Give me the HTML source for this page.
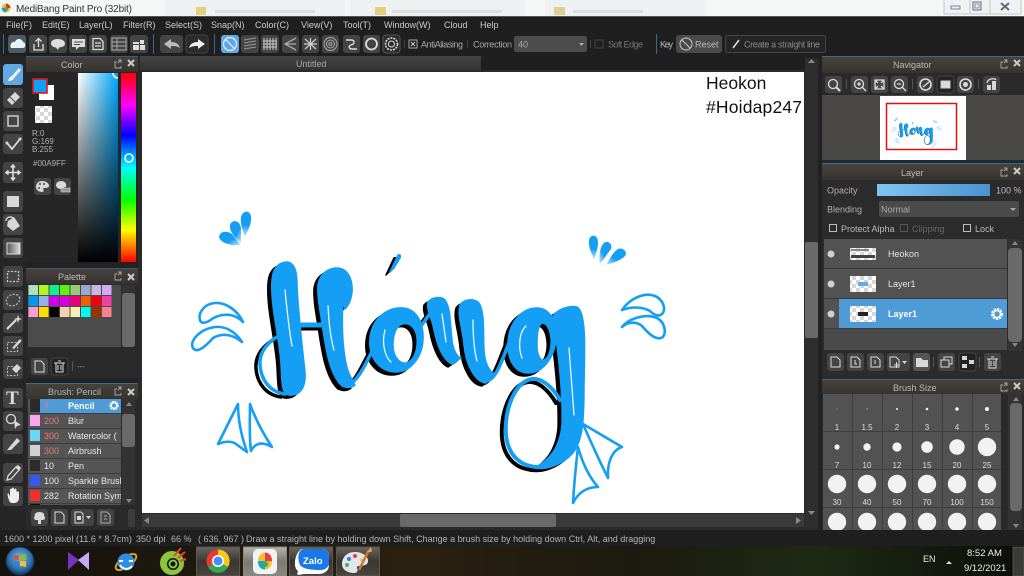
<!DOCTYPE html>
<html><head><meta charset="utf-8"><style>
html,body{margin:0;padding:0;background:#222;width:1024px;height:576px;overflow:hidden}
svg{display:block}
text{font-family:"Liberation Sans",sans-serif;font-size:9px;fill:#bcbcbc}
.i{fill:none;stroke:#ddd;stroke-width:1.3}
.f{fill:#ddd}
.d{fill:#d8d8d8}
.bt{fill:#444}
.l{font-size:9px;fill:#ccc}
.a{fill:currentColor;stroke:currentColor;stroke-width:1.5;stroke-linejoin:round}
.s{fill:none;stroke:currentColor;stroke-linecap:round;stroke-linejoin:round}
.dot{fill:#f2f2f2}
</style></head><body>
<svg width="1024" height="576" viewBox="0 0 1024 576" xmlns="http://www.w3.org/2000/svg">
<defs>
<linearGradient id="hue" x1="0" y1="0" x2="0" y2="1">
<stop offset="0" stop-color="#ff0000"/><stop offset=".17" stop-color="#ff00ff"/><stop offset=".33" stop-color="#0000ff"/><stop offset=".5" stop-color="#00ffff"/><stop offset=".67" stop-color="#00ff00"/><stop offset=".83" stop-color="#ffff00"/><stop offset="1" stop-color="#ff0000"/>
</linearGradient>
<linearGradient id="sv1"><stop offset="0" stop-color="#fff"/><stop offset="1" stop-color="#00a9ff"/></linearGradient>
<linearGradient id="sv2" x1="0" y1="0" x2="0" y2="1"><stop offset="0" stop-color="#000" stop-opacity="0"/><stop offset="1" stop-color="#000"/></linearGradient>
<linearGradient id="tb" x1="0" y1="0" x2="0" y2="1"><stop offset="0" stop-color="#47423e"/><stop offset="1" stop-color="#36332f"/></linearGradient>
<linearGradient id="tab" x1="0" y1="0" x2="0" y2="1"><stop offset="0" stop-color="#444"/><stop offset="1" stop-color="#333"/></linearGradient>
<linearGradient id="op"><stop offset="0" stop-color="#80c4f4"/><stop offset="1" stop-color="#4a94d0"/></linearGradient>
<linearGradient id="gr"><stop offset="0" stop-color="#555"/><stop offset="1" stop-color="#ddd"/></linearGradient>
<linearGradient id="tk" x1="0" y1="0" x2="0" y2="1"><stop offset="0" stop-color="#6a655e"/><stop offset=".5" stop-color="#3a3630"/><stop offset="1" stop-color="#4a453e"/></linearGradient>
<linearGradient id="tk2" x1="0" y1="0" x2="0" y2="1"><stop offset="0" stop-color="#b8b4ae"/><stop offset=".5" stop-color="#7c7872"/><stop offset="1" stop-color="#8c8880"/></linearGradient>
<linearGradient id="wall"><stop offset="0" stop-color="#14120e"/><stop offset=".4" stop-color="#2a2010"/><stop offset=".62" stop-color="#1c1a10"/><stop offset=".8" stop-color="#1e2a14"/><stop offset="1" stop-color="#0c0c0a"/></linearGradient>
<linearGradient id="d1" x1="1" y1="0" x2="0" y2="1"><stop offset="0" stop-color="#149ff5"/><stop offset=".6" stop-color="#149ff5"/><stop offset="1" stop-color="#d8eefc"/></linearGradient>
<linearGradient id="d2" x1="0" y1="0" x2="1" y2="1"><stop offset="0" stop-color="#149ff5"/><stop offset=".6" stop-color="#149ff5"/><stop offset="1" stop-color="#d8eefc"/></linearGradient>
<linearGradient id="d3" x1="0" y1="0" x2="0" y2="1"><stop offset="0" stop-color="#149ff5"/><stop offset=".55" stop-color="#149ff5"/><stop offset="1" stop-color="#d8eefc"/></linearGradient>
<radialGradient id="orb" cx=".5" cy=".4" r=".6"><stop offset="0" stop-color="#7ab8e8"/><stop offset=".7" stop-color="#2a6ca8"/><stop offset="1" stop-color="#12365a"/></radialGradient>
<pattern id="chk" width="8" height="8" patternUnits="userSpaceOnUse"><rect width="8" height="8" fill="#fff"/><rect width="4" height="4" fill="#d8d8d8"/><rect x="4" y="4" width="4" height="4" fill="#d8d8d8"/></pattern>
<clipPath id="cCanvas"><rect x="142" y="72" width="662" height="441"/></clipPath>
<clipPath id="cBrush"><rect x="28" y="399" width="93" height="106"/></clipPath>
<clipPath id="cSize"><rect x="823" y="394" width="178" height="137"/></clipPath>

<g id="letters">
<path class="a" d="M272,280 C273,265 282,262 287,262 C296,263 297,275 297,285 C298,310 302,345 305,372 C306,388 300,396 289,395 C281,394 282,380 281,365 C280,340 270,305 272,280 Z"/>
<path class="s" stroke-width="3.500" d="M280,335 C268,342 259,352 260,365 C261,380 270,392 285,394"/>
<path class="s" stroke-width="5" d="M298,325 L322,325"/>
<path class="a" d="M318,285 C320,272 330,268 337,268 C348,268 353,280 352,292 C351,300 348,306 345,309 L343,300 C342,318 342,340 345,358 C347,372 352,380 355,385 C352,388 347,388 342,386 C330,375 326,350 323,330 C321,315 317,298 318,285 Z"/>
<path class="s" stroke-width="3.500" d="M350,384 C360,378 366,362 373,350"/>
<path class="a" fill-rule="evenodd" d="M370,338 C372,318 388,307 403,308 C416,309 424,322 423,340 C422,358 410,372 396,372 C380,372 368,358 370,338 Z M393,345 C393,356 399,364 406,363 C414,361 418,350 417,338 C416,328 410,322 402,324 C396,326 393,335 393,345 Z"/>
<path class="a" d="M398,255 C400,254 401,256 400,258 L394,268 L390,272 Z"/>
<path class="s" stroke-width="3.500" d="M418,330 C424,322 432,310 440,302"/>
<path class="a" d="M428,302 C432,297 441,296 445,300 C451,308 450,325 452,340 C453,350 457,357 461,358 L452,364 C443,360 437,345 434,330 C432,318 426,310 428,302 Z"/>
<path class="a" d="M460,305 C464,299 474,298 479,303 C485,312 483,335 484,350 C485,365 490,372 495,374 L486,383 C475,382 466,365 464,345 C463,330 457,315 460,305 Z"/>
<path class="s" stroke-width="3.500" d="M486,381 C498,380 504,352 512,336"/>
<path class="a" fill-rule="evenodd" d="M508,345 C508,322 522,308 537,308 C548,308 556,318 556,336 C556,355 544,373 528,373 C516,373 508,362 508,345 Z M537,345 C537,355 540,361 544,360 C549,358 552,348 551,338 C550,328 546,323 542,323 C538,325 537,335 537,345 Z"/>
<path class="a" d="M553,316 C558,309 570,305 577,307 C586,312 585,345 584,385 C584,420 583,440 573,453 C561,466 545,470 534,468 C550,460 560,447 562,425 C563,395 558,350 553,316 Z"/>
<path class="s" stroke-width="4" d="M560,400 C553,388 543,378 532,379 C515,381 504,410 506,435 C508,455 520,466 537,467"/>
</g>

<g id="deco">
<path fill="url(#d3)" d="M241,217 C243,209 252,210 251,219 C251,226 247,232 245,237 C243,231 240,224 241,217Z"/>
<path fill="url(#d2)" d="M230,225 C232,219 240,220 241,228 L241,243 C236,238 229,232 230,225Z"/>
<path fill="url(#d2)" d="M219,237 C220,230 228,231 232,234 L241,245 C233,246 221,244 219,237Z"/>
<path fill="url(#d3)" d="M589,240 C591,233 598,235 598,242 C598,249 596,253 594,260 C592,253 588,247 589,240Z"/>
<path fill="url(#d1)" d="M603,244 C607,239 613,244 611,249 L600,264 C599,258 599,250 603,244Z"/>
<path fill="url(#d1)" d="M618,249 C623,247 628,252 625,256 C621,260 613,263 606,265 C609,260 613,252 618,249Z"/>
<g fill="none" stroke="#149ff5" stroke-width="2.600" stroke-linecap="round" stroke-linejoin="round">
<path d="M243,322 C238,311 226,302 215,303 C203,304 198,314 200,320 C201,324 205,323 209,321 C218,314 232,311 243,322"/>
<path d="M242,342 C235,331 225,326 215,327 C200,329 189,341 193,348 C197,354 206,346 213,338 C222,333 232,334 242,342"/>
<path d="M622,310 C630,298 645,292 655,296 C664,300 666,310 662,314 C659,317 654,315 650,311 C641,306 630,307 622,310"/>
<path d="M622,327 C628,319 645,313 657,318 C666,323 667,336 661,338 C655,340 648,333 642,326 C636,321 628,322 622,327"/>
<path d="M238,404 L218,444 C225,441 232,441 236,444 L247,452 C241,435 238,420 238,404Z"/>
<path d="M250,404 C250,420 249,436 251,451 C254,445 260,440 272,447 C262,432 255,418 250,404Z"/>
<path d="M583,424 L622,447 C612,450 607,463 608,478 C600,462 590,440 583,424Z"/>
<path d="M578,447 C583,465 590,478 598,487 C586,487 578,493 573,503 C574,485 576,465 578,447Z"/>
</g>
</g>
</defs>

<!-- base -->
<rect width="1024" height="576" fill="#222"/>
<!-- title bar -->
<rect width="1024" height="16" fill="#f5f7f7"/>
<rect x="165" y="0" width="180" height="16" fill="#eef0f1"/><rect x="350" y="0" width="175" height="16" fill="#eef0f1"/><rect x="545" y="0" width="160" height="16" fill="#eef0f1"/>
<rect x="196" y="7" width="10" height="8" fill="#e4cf7a"/><rect x="375" y="7" width="11" height="8" fill="#e4cf7a"/><rect x="554" y="7" width="11" height="8" fill="#e0d090"/>
<rect x="215" y="10" width="100" height="3" fill="#dcdfe2"/><rect x="392" y="10" width="110" height="3" fill="#dcdfe2"/><rect x="573" y="10" width="70" height="3" fill="#dcdfe2"/>
<circle cx="6" cy="8" r="4.500" fill="#f0c030"/><path d="M6,3.500 A4.500,4.500 0 0 1 10.500,8 L6,8Z" fill="#e83030"/><path d="M1.500,8 A4.500,4.500 0 0 0 6,12.500 L6,8Z" fill="#18a0e0"/><circle cx="6" cy="9" r="2" fill="#30b060"/>
<text x="16" y="12" style="font-size:10px;fill:#333" textLength="116">MediBang Paint Pro (32bit)</text>
<rect x="944" y="-1" width="26" height="15" fill="#eef2f4" stroke="#c4c8cc"/><rect x="970" y="-1" width="20" height="15" fill="#eef2f4" stroke="#c4c8cc"/><rect x="990" y="-1" width="31" height="15" fill="#eef2f4" stroke="#c4c8cc"/>
<rect x="951" y="6" width="9" height="3" fill="none" stroke="#667" stroke-width=".8"/><rect x="973" y="2" width="8" height="8" fill="none" stroke="#667"/><rect x="975" y="4" width="4" height="4" fill="none" stroke="#667" stroke-width=".7"/>
<path d="M1001,3 L1009,10 M1009,3 L1001,10" stroke="#667" stroke-width="2"/>

<!-- menu -->
<rect y="16" width="1024" height="1" fill="#555"/>
<rect y="17" width="1024" height="39" fill="#1f1f1f"/>
<text x="6" y="28" class="l">File(F)</text><text x="42" y="28" class="l">Edit(E)</text><text x="79" y="28" class="l">Layer(L)</text><text x="123" y="28" class="l">Filter(R)</text><text x="165" y="28" class="l">Select(S)</text><text x="211" y="28" class="l">Snap(N)</text><text x="255" y="28" class="l">Color(C)</text><text x="301" y="28" class="l">View(V)</text><text x="343" y="28" class="l">Tool(T)</text><text x="384" y="28" class="l">Window(W)</text><text x="444" y="28" class="l">Cloud</text><text x="480" y="28" class="l">Help</text>

<!-- toolbar -->
<rect x="3" y="34" width="1" height="20" fill="#3c6a8a"/><rect x="153" y="34" width="1" height="20" fill="#3c6a8a"/><rect x="214" y="34" width="1" height="20" fill="#3c6a8a"/>
<rect x="8" y="35" width="18" height="18" rx="3" fill="#4e5a66"/>
<path d="M11,48 C9,44 13,41 15,42 C16,38 22,38 23,42 C26,42 26,48 23,48Z" fill="#e8f2fa"/>
<g class="bt"><rect x="29" y="35" width="18" height="18" rx="3"/><rect x="49" y="35" width="18" height="18" rx="3"/><rect x="69" y="35" width="18" height="18" rx="3"/><rect x="89" y="35" width="18" height="18" rx="3"/><rect x="110" y="35" width="18" height="18" rx="3"/><rect x="130" y="35" width="18" height="18" rx="3"/><rect x="160" y="35" width="23" height="18" rx="3"/><rect x="241" y="35" width="18" height="18" rx="3"/><rect x="261" y="35" width="18" height="18" rx="3"/><rect x="282" y="35" width="17" height="18" rx="3"/><rect x="302" y="35" width="17" height="18" rx="3"/><rect x="322" y="35" width="17" height="18" rx="3"/><rect x="343" y="35" width="17" height="18" rx="3"/><rect x="363" y="35" width="17" height="18" rx="3"/></g>
<rect x="186" y="35" width="22" height="18" rx="3" fill="#2c2c2c" stroke="#444"/>
<rect x="383" y="35" width="17" height="18" rx="3" fill="#2c2c2c" stroke="#555"/>
<rect x="221" y="35" width="18" height="18" rx="3" fill="#62a8e2"/>
<circle cx="230" cy="44" r="6.500" fill="none" stroke="#e4f2fc" stroke-width="1.200"/><path d="M225.500,39.500 L234.500,48.500" stroke="#e4f2fc" stroke-width="1.200"/>
<path class="i" d="M34,44 V50 H43 V44 M38.500,47 V39 M35.500,41.500 L38.500,38.500 L41.500,41.500"/>
<path class="f" d="M58,39 C53,39 51,41 51,43.500 C51,46 54,47.500 56,47.500 L58,50 L59,47.500 C63,47 65,46 65,43.500 C65,41 62,39 58,39Z"/>
<path class="f" d="M72,39 H85 V47 H79 L76,50 V47 H72Z"/><path d="M74,42 H83 M74,44.500 H80" stroke="#4a4a4a"/>
<path class="i" d="M93,38.500 H100 L103,41.500 V49.500 H93Z M95,43 H101 M95,46 H101"/>
<path class="i" style="stroke:#aaa;stroke-width:1" d="M112,38 H126 V50 H112Z M112,42 H126 M112,46 H126 M117,38 V50"/>
<path class="f" d="M133,42 H139 V44 H133Z M133,45 H139 V50 H133Z M140,45 H145 V50 H140Z M140,40 H144 V44 H140Z"/>
<path fill="#bbb" d="M164,44 L171,39 V42 C176,42 179,44 180,48 C177,46 174,46 171,46 V49Z"/>
<path d="M205,44 L198,39 V42 C193,42 190,44 189,48 C192,46 195,46 198,46 V49Z" fill="#f0f0f0"/>
<path d="M244,40 L256,38 M244,43 L256,41 M244,46 L256,44 M244,49 L256,47" stroke="#999" stroke-width="1" fill="none"/>
<path d="M264,38 V50 M267,38 V50 M270,38 V50 M273,38 V50 M276,38 V50 M263,41 H277 M263,44 H277 M263,47 H277" stroke="#ccc" stroke-width="1"/>
<path class="i" style="stroke:#aaa" d="M296,38 L285,44 L296,50 M296,44 H286"/>
<path d="M310.500,38 V50 M305,39 L316,49 M316,39 L305,49 M304,44 H317" stroke="#ccc" stroke-width="1.200"/>
<circle cx="330.500" cy="44" r="6.500" class="i" style="stroke-width:1;stroke:#aaa"/><circle cx="330.500" cy="44" r="4" class="i" style="stroke-width:1;stroke:#aaa"/><circle cx="330.500" cy="44" r="1.500" class="i" style="stroke-width:1;stroke:#aaa"/>
<path class="i" d="M346,40 H351 C355,40 355,44 351,45 C348,46 349,49 352,49 H357" style="stroke-width:1.400"/>
<circle cx="371.500" cy="44" r="5.500" class="i" style="stroke-width:1.800"/>
<circle cx="391.500" cy="44" r="6" class="i" style="stroke-width:1.600;stroke-dasharray:2 1"/><circle cx="391.500" cy="44" r="3" class="i" style="stroke-width:1"/>
<rect x="404" y="40" width="1" height="8" fill="#444"/>
<rect x="409" y="40" width="8" height="8" fill="none" stroke="#aaa"/><path d="M411,42 L415,46 M415,42 L411,46" stroke="#ccc"/>
<text x="421" y="47.500" style="fill:#aaa" textLength="42">AntiAliasing</text><rect x="467" y="40" width="1" height="8" fill="#444"/>
<text x="473" y="47.500" style="fill:#aaa" textLength="39">Correction</text>
<rect x="514" y="36" width="73" height="16" rx="2" fill="#4c4c4c"/><text x="518" y="47.500" style="fill:#aaa">40</text><path d="M579,43 h5 l-2.500,3z" fill="#aaa"/>
<rect x="590" y="40" width="1" height="8" fill="#444"/><rect x="595" y="40" width="8" height="8" fill="none" stroke="#444"/>
<text x="608" y="47.500" style="fill:#777" textLength="35">Soft Edge</text>
<rect x="656" y="34" width="1" height="20" fill="#3c6a8a"/>
<text x="660" y="47.500" style="fill:#bbb" textLength="13">Key</text>
<rect x="676" y="35" width="46" height="18" rx="3" fill="#4a4a4a"/><circle cx="686" cy="44" r="6" fill="none" stroke="#ccc"/><path d="M682,40 L690,48" stroke="#ccc"/><text x="695" y="47.500" style="fill:#bbb">Reset</text>
<rect x="725.500" y="35.500" width="100" height="17" rx="2" fill="#252525" stroke="#444"/><path d="M733,48 L739,40" stroke="#ddd" stroke-width="1.600"/><text x="744" y="47.500" style="fill:#8a8a8a" textLength="76">Create a straight line</text>

<!-- tab / workspace -->
<rect x="138" y="56" width="680" height="474" fill="#2a2a2a"/>
<rect x="140" y="56" width="341" height="14" fill="url(#tab)"/><text x="296" y="67" style="fill:#a8a8a8">Untitled</text>
<rect x="481" y="56" width="337" height="14" fill="#1f1f1f"/>

<!-- canvas -->
<rect x="142" y="72" width="662" height="441" fill="#fff"/>
<g clip-path="url(#cCanvas)">
<use href="#letters" transform="translate(-4,3)" style="color:#000"/>
<use href="#letters" style="color:#149ff5"/>
<use href="#deco"/>
<g fill="none" stroke="#e8f6ff" stroke-width="1.300" stroke-linecap="round">
<path d="M285,290 C287,310 289,330 292,346"/><path d="M328,306 C329,325 331,340 334,350"/><path d="M385,330 C381,345 386,358 391,362"/><path d="M442,314 L446,342"/><path d="M473,320 C473,335 474,350 477,361"/><path d="M526,326 C519,332 518,348 522,358"/><path d="M569,348 C571,375 573,400 574,415"/>
</g>
<text x="706" y="89" style="font-size:17.500px;fill:#111">Heokon</text>
<text x="706" y="113" style="font-size:17.500px;fill:#111" textLength="96">#Hoidap247</text>
</g>

<!-- canvas scrollbars -->
<rect x="805" y="58" width="13" height="470" fill="#2e2e2e"/><rect x="805" y="242" width="13" height="96" rx="2" fill="#6a6a6a"/>
<path d="M808,63 h7 l-3.500,-4z M808,511 h7 l-3.500,4z" fill="#888"/>
<rect x="142" y="514" width="662" height="13" fill="#3a3a3a"/><rect x="400" y="514" width="156" height="13" rx="2" fill="#6a6a6a"/>
<path d="M149,517 v7 l-5,-3.500z M796,517 v7 l5,-3.500z" fill="#888"/>

<!-- left toolbar -->
<rect x="0" y="56" width="26" height="474" fill="#262626"/>
<rect x="3" y="64" width="20" height="21" rx="3" fill="#62a8e2"/>
<path d="M8,81 C9,78 10,77 12,76 L19,68 L21,70 L14,78 C13,80 11,81 8,81Z" fill="#eef6fc"/>
<g class="bt"><rect x="3" y="88" width="20" height="20" rx="3"/><rect x="3" y="111" width="20" height="20" rx="3"/><rect x="3" y="134" width="20" height="20" rx="3"/><rect x="3" y="162" width="20" height="21" rx="3"/><rect x="3" y="191" width="20" height="21" rx="3"/><rect x="3" y="214" width="20" height="21" rx="3"/><rect x="3" y="238" width="20" height="20" rx="3"/><rect x="3" y="266" width="20" height="21" rx="3"/><rect x="3" y="290" width="20" height="20" rx="3"/><rect x="3" y="313" width="20" height="20" rx="3"/><rect x="3" y="336" width="20" height="20" rx="3"/><rect x="3" y="359" width="20" height="20" rx="3"/><rect x="3" y="388" width="20" height="20" rx="3"/><rect x="3" y="411" width="20" height="20" rx="3"/><rect x="3" y="434" width="20" height="20" rx="3"/><rect x="3" y="463" width="20" height="20" rx="3"/><rect x="3" y="486" width="20" height="20" rx="3"/></g>
<path d="M7,100 L15,92 L20,97 L12,105Z" class="d"/><path d="M10,97 L15,102" stroke="#4a4a4a"/>
<rect x="8" y="116" width="10" height="10" fill="none" stroke="#ccc" stroke-width="1.500"/>
<path class="i" style="stroke-width:1.800" d="M7,143 L12,149 L20,139"/><circle cx="7" cy="143" r="1.500" class="d"/><circle cx="20" cy="139" r="1.500" class="d"/>
<path class="i" style="stroke-width:1.600" d="M13,165 V180 M6,172.500 H20 M11,167.500 L13,165 L15,167.500 M11,177.500 L13,180 L15,177.500 M8.500,170.500 L6,172.500 L8.500,174.500 M17.500,170.500 L20,172.500 L17.500,174.500"/>
<rect x="7" y="196" width="12" height="11" class="d"/>
<path d="M8,221 L14,217 L20,226 L13,231 L7,226Z" class="d"/><path d="M6,221 C6,217 11,216 13,218" class="i"/>
<rect x="7" y="243" width="13" height="11" fill="url(#gr)" stroke="#ddd"/>
<rect x="7.500" y="271.500" width="11" height="10" fill="none" stroke="#ccc" stroke-dasharray="2 1.500" stroke-width="1.300"/>
<ellipse cx="13" cy="300" rx="7" ry="5.500" fill="none" stroke="#bbb" stroke-dasharray="2 1.500" stroke-width="1.200" transform="rotate(-25 13 300)"/>
<path class="i" style="stroke-width:2" d="M7,329 L16,320"/><path d="M18,315 l1,3 3,1 -3,1 -1,3 -1,-3 -3,-1 3,-1z" class="d"/>
<rect x="7.500" y="342.500" width="10" height="9" fill="none" stroke="#bbb" stroke-dasharray="2 1.500"/><path d="M12,348 L20,339 L21.500,341 L14,349Z" class="d"/>
<rect x="7.500" y="366.500" width="10" height="9" fill="none" stroke="#bbb" stroke-dasharray="2 1.500"/><path d="M12,369 L17,364 L21,368 L16,373Z" class="d"/>
<text x="6" y="404" style="font-size:19px;font-family:'Liberation Serif',serif;font-weight:bold;fill:#ddd">T</text>
<circle cx="11" cy="419" r="4.500" class="i"/><path d="M14,420 L21,425 L17,426 L15,429Z" class="d"/>
<path d="M7,450 L17,438 L20,441 L11,450Z" class="d"/>
<path d="M7,480 L8,476 L16,467 L19,470 L11,479Z" class="i"/><path d="M15,467 L18,465 L21,468 L19,471Z" class="d"/>
<path d="M8,497 C7,494 8,492 9,494 L10,497 V490 C10,488 12,488 12,490 V489 C12,487 14,487 14,489 V490 C15,488 16.500,488 16.500,490 V492 C17.500,491 19,491 19,493 V498 C19,501 17,503 14,503 H12 C10,503 9,501 8,497Z" fill="#eee"/>

<!-- Color panel -->
<rect x="26" y="56" width="112" height="212" fill="#262626"/>
<rect x="26" y="57" width="112" height="15" fill="url(#tb)"/><rect x="26" y="56" width="112" height="1" fill="#3c5a70"/>
<text x="61" y="68" style="fill:#bbb">Color</text>
<path d="M117,62 h-2 v6 h6 v-2 M118,60 h3 v3 M121,60 l-3,3" fill="none" stroke="#aaa" stroke-width=".9"/><path d="M128,60 L134,66 M134,60 L128,66" stroke="#ccc" stroke-width="2"/>
<rect x="39" y="85" width="15" height="15" fill="#fff"/>
<rect x="33" y="79" width="14" height="14" fill="#109ff8" stroke="#e01818" stroke-width="1.600"/>
<rect x="35" y="106" width="17" height="17" fill="url(#chk)"/>
<text x="32" y="136" style="font-size:8px;fill:#b0b0b0">R:0</text><text x="32" y="144" style="font-size:8px;fill:#b0b0b0">G:169</text><text x="32" y="152" style="font-size:8px;fill:#b0b0b0">B:255</text>
<text x="33" y="166" style="font-size:8px;fill:#b0b0b0">#00A9FF</text>
<rect x="34" y="178" width="17" height="17" rx="3" fill="#444"/><rect x="54" y="178" width="17" height="17" rx="3" fill="#444"/>
<path d="M42,181 C38,181 36,184 36,187 C36,190 39,192 42,192 C44,192 44,190 43,189 C43,187 49,189 49,186 C49,183 46,181 42,181Z" class="d"/><circle cx="40" cy="184" r="1" fill="#444"/><circle cx="44" cy="184" r="1" fill="#444"/><circle cx="39" cy="188" r="1" fill="#444"/>
<path d="M61,181 C58,181 56,183 56,185 C56,188 59,189 61,189 C63,189 63,187 66,187 C67,184 65,181 61,181Z" class="d"/><rect x="61" y="188" width="9" height="4" fill="#999" stroke="#ddd" stroke-width=".5"/>
<rect x="78" y="73" width="40" height="189" fill="url(#sv1)"/><rect x="78" y="73" width="40" height="189" fill="url(#sv2)"/>
<path d="M113,73 A5,5 0 0 0 118,78" fill="none" stroke="#fff" stroke-width="1.600"/>
<rect x="121" y="73" width="15" height="189" fill="url(#hue)"/>
<circle cx="129" cy="158" r="4" fill="none" stroke="#fff" stroke-width="1.600"/>
<rect x="26" y="262" width="112" height="6" fill="#222"/>

<!-- Palette -->
<rect x="26" y="268" width="112" height="112" fill="#2a2a2a"/>
<rect x="26" y="269" width="112" height="15" fill="url(#tb)"/><rect x="26" y="268" width="112" height="1" fill="#3c5a70"/>
<text x="58" y="280" style="fill:#bbb">Palette</text>
<path d="M117,274 h-2 v6 h6 v-2 M118,272 h3 v3 M121,272 l-3,3" fill="none" stroke="#aaa" stroke-width=".9"/><path d="M128,274 L134,280 M134,274 L128,280" stroke="#ccc" stroke-width="2"/>
<rect x="28" y="285" width="93" height="62" fill="#4b4b4b"/>
<g>
<rect x="28.500" y="285" width="9.500" height="10" fill="#a8e4c4"/><rect x="39" y="285" width="9.500" height="10" fill="#b0f820"/><rect x="49.500" y="285" width="9.500" height="10" fill="#10f090"/><rect x="60" y="285" width="9.500" height="10" fill="#60f010"/><rect x="70.500" y="285" width="9.500" height="10" fill="#98c878"/><rect x="81" y="285" width="9.500" height="10" fill="#9aa8d8"/><rect x="91.500" y="285" width="9.500" height="10" fill="#c8b8e0"/><rect x="102" y="285" width="9.500" height="10" fill="#d8a8f8"/>
<rect x="28.500" y="296" width="9.500" height="10" fill="#0098f0"/><rect x="39" y="296" width="9.500" height="10" fill="#98b0f0"/><rect x="49.500" y="296" width="9.500" height="10" fill="#d000e8"/><rect x="60" y="296" width="9.500" height="10" fill="#d800d8"/><rect x="70.500" y="296" width="9.500" height="10" fill="#e80080"/><rect x="81" y="296" width="9.500" height="10" fill="#f06000"/><rect x="91.500" y="296" width="9.500" height="10" fill="#f00010"/><rect x="102" y="296" width="9.500" height="10" fill="#f040a0"/>
<rect x="28.500" y="307" width="9.500" height="10" fill="#f8a0d0"/><rect x="39" y="307" width="9.500" height="10" fill="#ffe000"/><rect x="49.500" y="307" width="9.500" height="10" fill="#000"/><rect x="60" y="307" width="9.500" height="10" fill="#f8d0b0"/><rect x="70.500" y="307" width="9.500" height="10" fill="#f8f0b0"/><rect x="81" y="307" width="9.500" height="10" fill="#00f8f0"/><rect x="91.500" y="307" width="9.500" height="10" fill="#a03000"/><rect x="102" y="307" width="9.500" height="10" fill="#f88090"/>
</g>
<rect x="122" y="285" width="13" height="62" fill="#333"/><rect x="122" y="293" width="13" height="54" rx="3" fill="#6a6a6a"/>
<rect x="31" y="358" width="17" height="17" rx="3" fill="#444"/><rect x="51" y="358" width="17" height="17" rx="3" fill="#222" stroke="#444"/>
<path class="i" style="stroke-width:1" d="M35,361 H41 L44,364 V372 H35Z"/>
<path class="i" style="stroke-width:1" d="M54,363 H65 M56,363 V372 H63 V363 M58,361 H61 M58,365 V370 M61,365 V370"/>
<rect x="72" y="361" width="1" height="10" fill="#555"/><text x="77" y="369" style="fill:#999;font-size:8px">---</text>
<rect x="26" y="378" width="112" height="5" fill="#222"/>

<!-- Brush panel -->
<rect x="26" y="383" width="112" height="147" fill="#2a2a2a"/>
<rect x="26" y="384" width="112" height="15" fill="url(#tb)"/><rect x="26" y="383" width="112" height="1" fill="#3c6a8a"/>
<text x="48" y="395" style="fill:#b4b4b4">Brush: Pencil</text>
<path d="M117,389 h-2 v6 h6 v-2 M118,387 h3 v3 M121,387 l-3,3" fill="none" stroke="#aaa" stroke-width=".9"/><path d="M128,389 L134,395 M134,389 L128,395" stroke="#ccc" stroke-width="2"/>
<rect x="28" y="399" width="93" height="106" fill="#555"/>
<g clip-path="url(#cBrush)">
<rect x="40" y="399" width="81" height="14" fill="#4f9bd6"/>
<rect x="30" y="399" width="10" height="13" fill="#2a2a2a"/>
<path d="M28,413.500 H121 M28,428.500 H121 M28,443.500 H121 M28,458.500 H121 M28,473.500 H121 M28,488.500 H121 M28,503.500 H121" stroke="#3d3d3d"/>
<rect x="30" y="415" width="10" height="11" fill="#f8a8f0"/><rect x="30" y="430" width="10" height="11" fill="#68d8f8"/><rect x="30" y="445" width="10" height="11" fill="#d0d0d0"/><rect x="30" y="460" width="10" height="11" fill="#2c2c2c"/><rect x="30" y="475" width="10" height="11" fill="#3858f0"/><rect x="30" y="490" width="10" height="11" fill="#f03030"/>
<rect x="30" y="504" width="10" height="2" fill="#111"/>
<text x="44" y="409" style="fill:#e87878;font-weight:bold">7</text><text x="68" y="409" style="fill:#fff;font-weight:bold">Pencil</text>
<text x="44" y="424" style="fill:#e87878">200</text><text x="68" y="424" style="fill:#e8e8e8">Blur</text>
<text x="44" y="439" style="fill:#e87878">300</text><text x="68" y="439" style="fill:#e8e8e8">Watercolor (</text>
<text x="44" y="454" style="fill:#e87878">300</text><text x="68" y="454" style="fill:#e8e8e8">Airbrush</text>
<text x="44" y="469" style="fill:#e8e8e8">10</text><text x="68" y="469" style="fill:#e8e8e8">Pen</text>
<text x="44" y="484" style="fill:#e8e8e8">100</text><text x="68" y="484" style="fill:#e8e8e8">Sparkle Brush</text>
<text x="44" y="499" style="fill:#e8e8e8">282</text><text x="68" y="499" style="fill:#e8e8e8">Rotation Sym</text>
<circle cx="114" cy="405.500" r="3.500" fill="none" stroke="#fff" stroke-width="2.400" stroke-dasharray="1.600 .8"/><circle cx="114" cy="405.500" r="2.800" fill="none" stroke="#fff" stroke-width="1.200"/>
</g>
<rect x="122" y="399" width="13" height="106" fill="#333"/><rect x="122" y="414" width="13" height="33" rx="3" fill="#6a6a6a"/>
<path d="M126,406 h6 l-3,-4z M126,499 h6 l-3,4z" fill="#888"/>
<rect x="31" y="509" width="17" height="17" rx="3" fill="#444"/><rect x="51" y="509" width="17" height="17" rx="3" fill="#444"/><rect x="71" y="509" width="23" height="17" rx="3" fill="#444"/><rect x="97" y="509" width="17" height="17" rx="3" fill="#444"/>
<path d="M39.500,512 C36,512 34,514 35,516 C33,517 34,520 36,520 H38 V524 H41 V520 H43 C45,520 46,517 44,516 C45,514 43,512 39.500,512Z" class="d"/>
<path class="i" style="stroke-width:1" d="M55,512 H61 L64,515 V523 H55Z"/>
<path class="i" style="stroke-width:1" d="M75,512 H81 L83,514 V523 H75Z"/><rect x="77" y="516" width="4" height="4" class="d"/><path d="M86,516 h5 l-2.500,3z" class="d"/>
<path class="i" style="stroke-width:1;stroke:#aaa" d="M101,512 H107 L110,515 V523 H101Z M104,516 H107 M104,519 H107"/>
<rect x="128" y="509" width="7" height="18" rx="2" fill="#3c3c3c"/>

<!-- Navigator -->
<rect x="822" y="56" width="202" height="108" fill="#2a2a2a"/>
<rect x="822" y="57" width="202" height="16" fill="url(#tb)"/><rect x="822" y="56" width="202" height="1" fill="#3c6a8a"/>
<text x="893" y="68" style="fill:#bbb">Navigator</text>
<path d="M1003,62 h-2 v6 h6 v-2 M1004,60 h3 v3 M1007,60 l-3,3" fill="none" stroke="#aaa" stroke-width=".9"/><path d="M1014,60 L1020,66 M1020,60 L1014,66" stroke="#ccc" stroke-width="2"/>
<g class="bt"><rect x="825" y="76" width="17" height="17" rx="3"/><rect x="851" y="76" width="17" height="17" rx="3"/><rect x="871" y="76" width="17" height="17" rx="3"/><rect x="891" y="76" width="17" height="17" rx="3"/><rect x="917" y="76" width="17" height="17" rx="3"/><rect x="957" y="76" width="17" height="17" rx="3"/><rect x="983" y="76" width="17" height="17" rx="3"/></g>
<rect x="937" y="76" width="17" height="17" rx="3" fill="#252525" stroke="#444"/>
<circle cx="833" cy="84" r="4.500" class="i"/><path d="M836,87 L840,91" class="i" style="stroke-width:2"/><circle cx="859" cy="84" r="4.500" class="i"/><path d="M862,87 L866,91 M857,84 H861 M859,82 V86" class="i"/>
<path class="i" d="M875,80 H884 V89 H875Z M875,80 L878,83 M884,80 L881,83 M875,89 L878,86 M884,89 L881,86"/>
<circle cx="899" cy="84" r="4.500" class="i"/><path d="M902,87 L906,91 M897,84 H901" class="i"/>
<circle cx="925.500" cy="84.500" r="5.500" class="i" style="stroke-width:1.600"/><path d="M923,87 L929,82" class="i"/>
<rect x="941" y="81" width="9" height="7" fill="#ddd" stroke="#ccc"/>
<circle cx="965.500" cy="84.500" r="5.500" class="i" style="stroke-width:1.600"/><circle cx="965.500" cy="84.500" r="2.500" class="d"/>
<path class="d" d="M987,85 H991 V90 H987Z M992,81 H996 V90 H992Z"/><path d="M987,83 C988,78 995,78 996,80" class="i"/>
<rect x="846" y="79" width="1" height="10" fill="#555"/><rect x="912" y="79" width="1" height="10" fill="#555"/><rect x="978" y="79" width="1" height="10" fill="#555"/>
<rect x="822" y="95" width="202" height="65" fill="#4a4845"/>
<rect x="880" y="96" width="86" height="64" fill="#fff"/>
<g transform="translate(870.900,95.400) scale(.106,.105)">
<use href="#letters" transform="translate(-4,3)" style="color:#0a3a60"/><use href="#letters" style="color:#149ff5"/><use href="#deco" opacity=".7"/>
</g>
<rect x="886.500" y="103.500" width="70" height="46" fill="none" stroke="#e01010" stroke-width="1.500"/>
<rect x="822" y="160" width="202" height="4" fill="#1f2a33"/>

<!-- Layer -->
<rect x="822" y="164" width="202" height="212" fill="#2c2c2c"/>
<rect x="822" y="164" width="202" height="16" fill="url(#tb)"/><rect x="822" y="163" width="202" height="1" fill="#3c6a8a"/>
<text x="901" y="176" style="fill:#bbb">Layer</text>
<path d="M1003,170 h-2 v6 h6 v-2 M1004,168 h3 v3 M1007,168 l-3,3" fill="none" stroke="#aaa" stroke-width=".9"/><path d="M1014,168 L1020,174 M1020,168 L1014,174" stroke="#ccc" stroke-width="2"/>
<text x="827" y="193.500" style="fill:#b0b0b0">Opacity</text>
<rect x="877" y="184" width="113" height="12" fill="url(#op)"/>
<text x="996" y="193.500" style="fill:#bbb">100 %</text>
<text x="827" y="212.500" style="fill:#b0b0b0">Blending</text>
<rect x="879" y="201" width="140" height="16" rx="2" fill="#4a4a4a"/><text x="881" y="212.500" style="fill:#aaa">Normal</text><path d="M1010,208 h6 l-3,3z" fill="#aaa"/>
<rect x="829.500" y="224.500" width="7" height="7" fill="none" stroke="#bbb"/><text x="841" y="232" style="fill:#bbb">Protect Alpha</text>
<rect x="900.500" y="224.500" width="7" height="7" fill="none" stroke="#555"/><text x="912" y="232" style="fill:#666">Clipping</text>
<rect x="963.500" y="224.500" width="7" height="7" fill="none" stroke="#bbb"/><text x="975" y="232" style="fill:#bbb">Lock</text>
<rect x="824" y="239" width="183" height="90" fill="#525252"/>
<rect x="824" y="268" width="183" height="1" fill="#3a3a3a"/><rect x="824" y="298" width="183" height="1" fill="#3a3a3a"/><rect x="824" y="328" width="183" height="1" fill="#3a3a3a"/>
<rect x="824" y="329" width="183" height="21" fill="#4a4a4a"/>
<rect x="839" y="299" width="168" height="29" fill="#4f9bd6"/>
<circle cx="831" cy="254" r="3.500" fill="#d0d0d0"/><circle cx="831" cy="284" r="3.500" fill="#d0d0d0"/><circle cx="831" cy="314" r="3.500" fill="#d0d0d0"/>
<rect x="850" y="248" width="26" height="12" fill="url(#chk)"/><rect x="851" y="249" width="18" height="2" fill="#888"/><rect x="851" y="255" width="24" height="3" fill="#444"/>
<rect x="850" y="276" width="26" height="16" fill="url(#chk)"/><rect x="858" y="282" width="10" height="4" fill="#5ab0ea"/>
<rect x="850" y="306" width="26" height="16" fill="url(#chk)"/><rect x="858" y="312" width="10" height="4" fill="#222"/>
<text x="888" y="257" style="fill:#e4e4e4">Heokon</text><text x="888" y="287" style="fill:#e4e4e4">Layer1</text><text x="888" y="317" style="fill:#fff;font-weight:bold">Layer1</text>
<circle cx="997" cy="314" r="4.500" fill="none" stroke="#fff" stroke-width="3" stroke-dasharray="2 1"/><circle cx="997" cy="314" r="3.500" fill="none" stroke="#fff" stroke-width="1.500"/>
<rect x="1008" y="239" width="14" height="112" fill="#333"/><rect x="1008" y="248" width="14" height="94" rx="4" fill="#6a6a6a"/>
<path d="M1012,245 h6 l-3,-4z M1012,343 h6 l-3,4z" fill="#888"/>
<g class="bt"><rect x="827" y="353" width="17" height="18" rx="3"/><rect x="847" y="353" width="17" height="18" rx="3"/><rect x="867" y="353" width="17" height="18" rx="3"/><rect x="887" y="353" width="23" height="18" rx="3"/><rect x="913" y="353" width="17" height="18" rx="3" style="fill:#555"/><rect x="938" y="353" width="17" height="18" rx="3"/><rect x="984" y="353" width="17" height="18" rx="3"/></g>
<rect x="959" y="353" width="17" height="18" rx="3" fill="#222" stroke="#444"/>
<path class="i" style="stroke-width:1" d="M831,357 H837 L840,360 V367 H831Z"/>
<path class="i" style="stroke-width:1" d="M851,357 H857 L860,360 V367 H851Z M855,360 V364 H857"/>
<path class="i" style="stroke-width:1" d="M871,357 H877 L880,360 V367 H871Z M875,360 V364"/>
<path class="i" style="stroke-width:1" d="M890,357 H896 L899,360 V367 H890Z M894,365 H899 M896.500,362 V368"/><path d="M902,361 h5 l-2.500,3z" class="d"/>
<path class="d" d="M916,358 H921 L923,360 H928 V367 H916Z"/>
<path class="i" style="stroke-width:1" d="M941,360 H949 V367 H941Z M944,360 V357 H952 V364 H949"/>
<rect x="962" y="356" width="5" height="4" class="d"/><rect x="962" y="364" width="5" height="4" class="d"/><rect x="969" y="360" width="5" height="4" class="d"/>
<path class="i" style="stroke-width:1" d="M987,359 H998 M989,359 V368 H996 V359 M991,357 H994 M991,361 V366 M994,361 V366"/>
<rect x="933" y="357" width="1" height="10" fill="#555"/><rect x="979" y="357" width="1" height="10" fill="#555"/>

<!-- Brush size -->
<rect x="822" y="376" width="202" height="154" fill="#2a2a2a"/>
<rect x="822" y="380" width="202" height="14" fill="url(#tb)"/><rect x="822" y="379" width="202" height="1" fill="#3c6a8a"/>
<text x="893" y="391" style="fill:#bbb">Brush Size</text>
<path d="M1003,385 h-2 v6 h6 v-2 M1004,383 h3 v3 M1007,383 l-3,3" fill="none" stroke="#aaa" stroke-width=".9"/><path d="M1014,383 L1020,389 M1020,383 L1014,389" stroke="#ccc" stroke-width="2"/>
<rect x="823" y="394" width="178" height="137" fill="#525252"/>
<path d="M852.500,394 V531 M882.500,394 V531 M912.500,394 V531 M942.500,394 V531 M972.500,394 V531 M823,431.500 H1001 M823,469.500 H1001 M823,507.500 H1001" stroke="#3e3e3e"/>
<g clip-path="url(#cSize)">
<g class="dot">
<circle cx="837" cy="409" r=".4"/><circle cx="867" cy="409" r=".7" opacity=".5"/><circle cx="897" cy="409" r="1"/><circle cx="927" cy="409" r="1.300"/><circle cx="957" cy="409" r="1.800"/><circle cx="987" cy="409" r="2"/>
<circle cx="837" cy="447" r="2.600"/><circle cx="867" cy="447" r="3.700"/><circle cx="897" cy="447" r="4.600"/><circle cx="927" cy="447" r="5.800"/><circle cx="957" cy="447" r="7.700"/><circle cx="987" cy="447" r="9.200"/>
<circle cx="837" cy="484" r="9.200"/><circle cx="867" cy="484" r="9.200"/><circle cx="897" cy="484" r="9.200"/><circle cx="927" cy="484" r="9.200"/><circle cx="957" cy="484" r="9.200"/><circle cx="987" cy="484" r="9.200"/>
<circle cx="837" cy="522" r="9.200"/><circle cx="867" cy="522" r="9.200"/><circle cx="897" cy="522" r="9.200"/><circle cx="927" cy="522" r="9.200"/><circle cx="957" cy="522" r="9.200"/><circle cx="987" cy="522" r="9.200"/>
</g>
<g style="text-anchor:middle">
<text x="837" y="430" style="font-size:8px;fill:#ddd">1</text><text x="867" y="430" style="font-size:8px;fill:#ddd">1.5</text><text x="897" y="430" style="font-size:8px;fill:#ddd">2</text><text x="927" y="430" style="font-size:8px;fill:#ddd">3</text><text x="957" y="430" style="font-size:8px;fill:#ddd">4</text><text x="987" y="430" style="font-size:8px;fill:#ddd">5</text>
<text x="837" y="468" style="font-size:8px;fill:#ddd">7</text><text x="867" y="468" style="font-size:8px;fill:#ddd">10</text><text x="897" y="468" style="font-size:8px;fill:#ddd">12</text><text x="927" y="468" style="font-size:8px;fill:#ddd">15</text><text x="957" y="468" style="font-size:8px;fill:#ddd">20</text><text x="987" y="468" style="font-size:8px;fill:#ddd">25</text>
<text x="837" y="505" style="font-size:8px;fill:#ddd">30</text><text x="867" y="505" style="font-size:8px;fill:#ddd">40</text><text x="897" y="505" style="font-size:8px;fill:#ddd">50</text><text x="927" y="505" style="font-size:8px;fill:#ddd">70</text><text x="957" y="505" style="font-size:8px;fill:#ddd">100</text><text x="987" y="505" style="font-size:8px;fill:#ddd">150</text>
</g>
</g>
<rect x="1008" y="394" width="14" height="137" fill="#333"/><rect x="1010" y="403" width="12" height="108" rx="4" fill="#6a6a6a"/>
<path d="M1013,401 h6 l-3,-4z M1013,524 h6 l-3,4z" fill="#888"/>

<!-- status bar -->
<rect y="530" width="1024" height="16" fill="#1f1f1f"/>
<text x="4" y="542" style="fill:#b4b4b4">1600 * 1200 pixel</text>
<text x="76" y="542" style="fill:#b4b4b4">(11.6 * 8.7cm)</text>
<text x="136" y="542" style="fill:#b4b4b4">350 dpi</text>
<text x="171" y="542" style="fill:#b4b4b4">66 %</text>
<text x="198" y="542" style="fill:#b4b4b4">( 636, 967 )</text>
<text x="246" y="542" style="fill:#b4b4b4">Draw a straight line by holding down Shift, Change a brush size by holding down Ctrl, Alt, and dragging</text>

<!-- taskbar -->
<rect y="546" width="1024" height="30" fill="url(#wall)"/>
<circle cx="20" cy="561" r="14" fill="url(#orb)" stroke="#1a3048"/>
<path d="M14,556 L19,555 V560 L14,560.500Z" fill="#e85030"/><path d="M20,555 L26,554 V560 L20,560Z" fill="#80c040"/><path d="M14,561.500 L19,561 V566 L14,566Z" fill="#3080d8"/><path d="M20,561 L26,561 V567 L20,566Z" fill="#f0c030"/>
<path d="M68,552 L79,560 L68,570Z" fill="#7a30c0"/><path d="M89,552 L78,560 L89,570Z" fill="#c8a8f4"/>
<ellipse cx="126" cy="562" rx="12" ry="5" fill="none" stroke="#e0a020" stroke-width="2" transform="rotate(-35 126 562)"/>
<circle cx="126" cy="562" r="8.500" fill="#2f8ee0"/><path d="M119,561 H133 M120,565 C123,570 129,570 132,566" stroke="#fff" stroke-width="2" fill="none"/><circle cx="126" cy="561" r="3" fill="#2f8ee0"/>
<circle cx="172" cy="563" r="12" fill="#8cc63c"/><circle cx="173" cy="564" r="6" fill="#101408"/><circle cx="173" cy="564" r="3.500" fill="none" stroke="#90c850" stroke-width="2"/><path d="M174,556 L181,548 M178,558 L185,552 M180,561 L186,559" stroke="#e84828" stroke-width="2"/>
<rect x="196.500" y="547" width="43" height="29" fill="url(#tk)" stroke="#5a5650"/>
<rect x="243.500" y="547" width="43" height="29" fill="url(#tk2)" stroke="#8c8880"/>
<rect x="289.500" y="547" width="43" height="29" fill="url(#tk)" stroke="#5a5650"/>
<rect x="336.500" y="547" width="43" height="29" fill="url(#tk)" stroke="#5a5650"/>
<circle cx="218" cy="561" r="11.500" fill="#e83a30"/><path d="M218,561 L228,567 A11.500,11.500 0 0 1 208,567Z" fill="#35a853"/><path d="M218,561 L218,549.500 A11.500,11.500 0 0 1 228,567Z" fill="#f8c818"/><circle cx="218" cy="561" r="6" fill="#fff"/><circle cx="218" cy="561" r="4.500" fill="#4a8ef0"/>
<rect x="253" y="549" width="24" height="25" rx="5" fill="#f2f2f2"/><ellipse cx="265" cy="561" rx="7" ry="8.500" fill="#f0c030"/><path d="M265,552.500 C271,553 272,558 272,561 L265,561Z" fill="#e84040"/><path d="M258,561 C258,567 261,569.500 265,569.500 L265,561Z" fill="#18a0d8"/><circle cx="265" cy="564" r="3" fill="#30b060"/>
<path d="M302,549 H322 C327,549 329,552 329,556 V565 C329,571 324,574 319,574 H303 C300,575 298,575 297,574 C298,572 298,571 297,570 C293,566 295,552 302,549Z" fill="#fff"/><path d="M303,549 H322 C327,549 329,552 329,556 V565 C327,568 325,570 320,570 C311,570 303,569 300,565 C297,558 298,551 303,549Z" fill="#1a78e8"/>
<text x="303" y="564" style="font-size:9.500px;font-weight:bold;fill:#fff">Zalo</text>
<path d="M355,552 C346,552 342,558 342,564 C342,570 348,573 354,573 C358,573 358,570 357,568 C356,564 366,568 368,562 C369,556 362,552 355,552Z" fill="#dfe6ec"/><circle cx="349" cy="559" r="2" fill="#3080d8"/><circle cx="355" cy="556" r="2" fill="#e84040"/><circle cx="347" cy="565" r="2" fill="#50b040"/><circle cx="362" cy="560" r="1.800" fill="#f0c030"/>
<path d="M359,570 L369,550" stroke="#c87830" stroke-width="2.500"/><path d="M367,552 L371,547 L372,552Z" fill="#e0a060"/>
<text x="923" y="562" style="font-size:9px;fill:#e8e8e8">EN</text>
<path d="M946,564 h6 l-3,-3z" fill="#e0e0e0"/>
<text x="967" y="556" style="font-size:9.500px;fill:#eee">8:52 AM</text>
<text x="964" y="571" style="font-size:9.500px;fill:#eee">9/12/2021</text>
<rect x="1013" y="547" width="11" height="29" fill="#3a3a36" stroke="#666" stroke-width=".6"/>
</svg>
</body></html>
